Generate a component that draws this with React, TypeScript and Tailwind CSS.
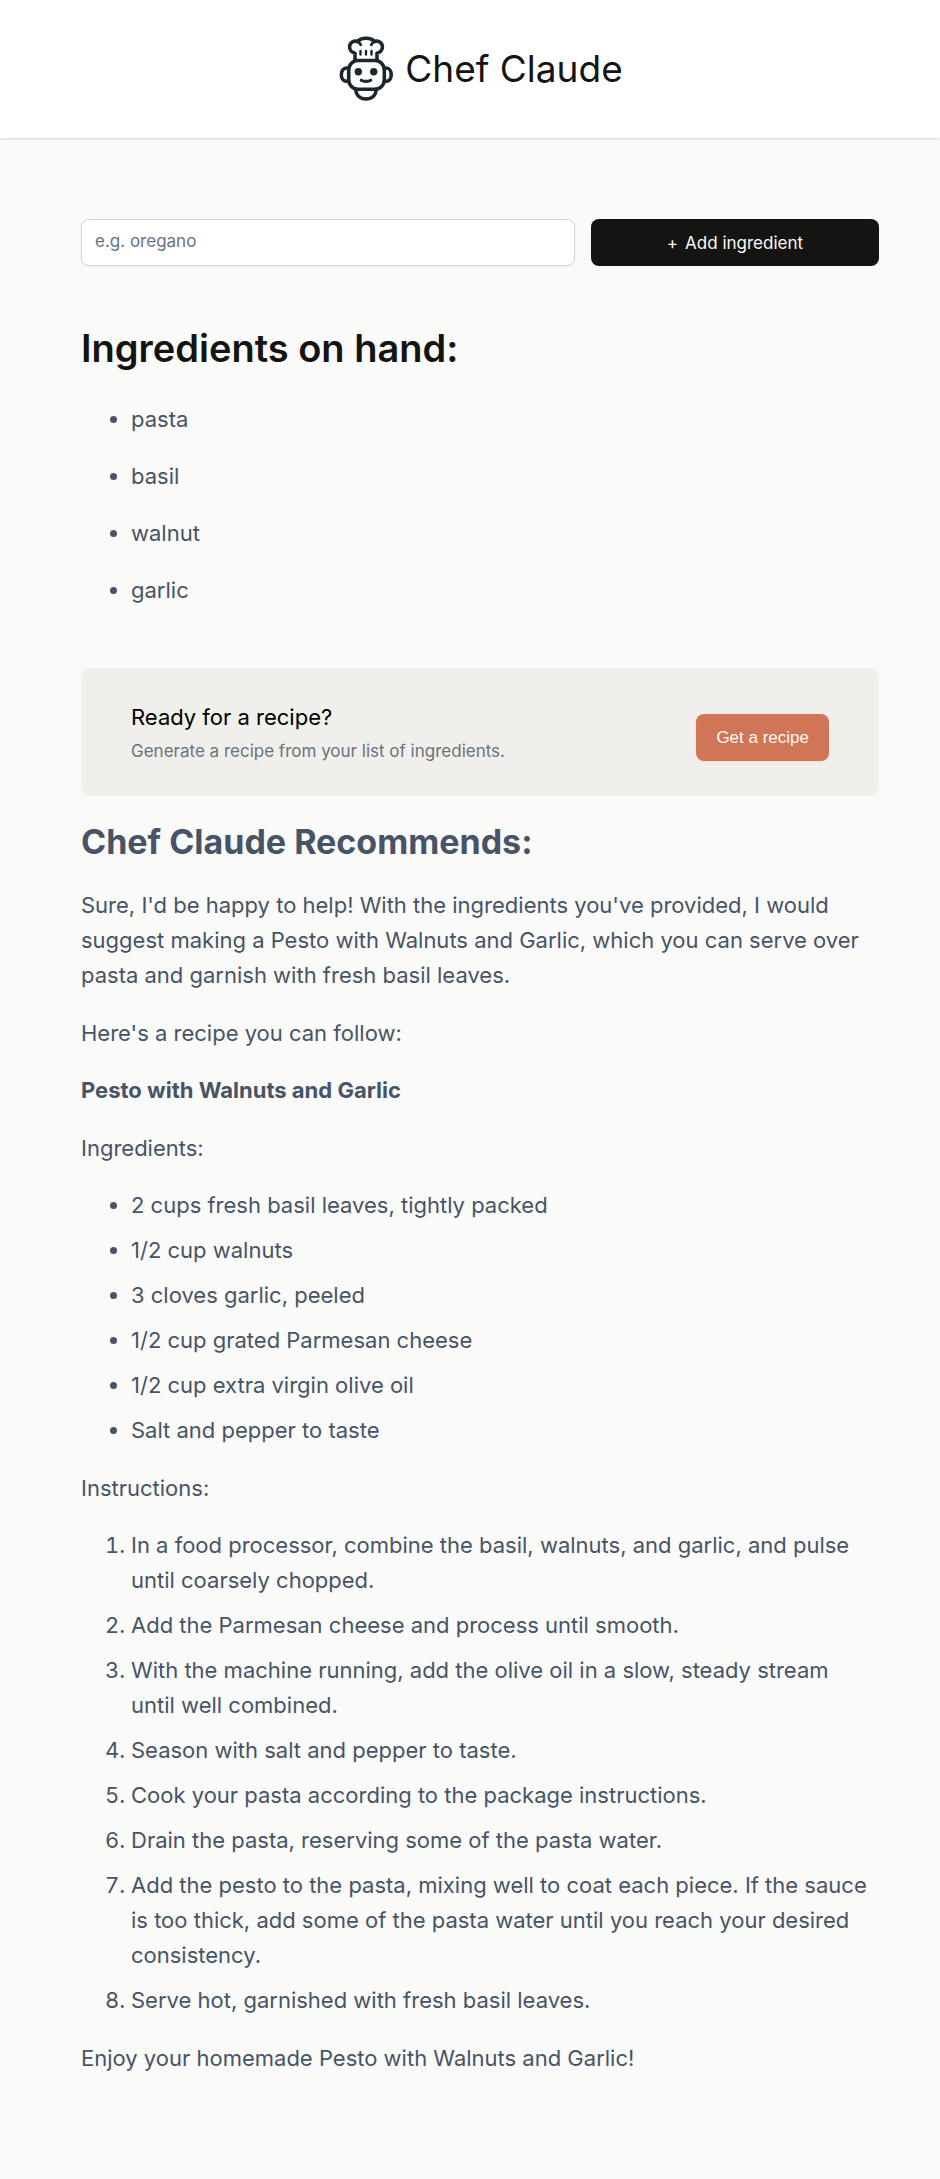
import { useState } from "react";
import type { FormEvent } from "react";

const recipeIngredients = [
  "2 cups fresh basil leaves, tightly packed",
  "1/2 cup walnuts",
  "3 cloves garlic, peeled",
  "1/2 cup grated Parmesan cheese",
  "1/2 cup extra virgin olive oil",
  "Salt and pepper to taste",
];

const instructions = [
  "In a food processor, combine the basil, walnuts, and garlic, and pulse until coarsely chopped.",
  "Add the Parmesan cheese and process until smooth.",
  "With the machine running, add the olive oil in a slow, steady stream until well combined.",
  "Season with salt and pepper to taste.",
  "Cook your pasta according to the package instructions.",
  "Drain the pasta, reserving some of the pasta water.",
  "Add the pesto to the pasta, mixing well to coat each piece. If the sauce is too thick, add some of the pasta water until you reach your desired consistency.",
  "Serve hot, garnished with fresh basil leaves.",
];

function ChefLogo() {
  return (
    <svg
      viewBox="0 0 54 66"
      className="h-[66px] w-[54px] shrink-0"
      fill="none"
      stroke="#1c272e"
      strokeWidth="3.6"
      strokeLinejoin="round"
      strokeLinecap="round"
      aria-hidden="true"
    >
      <path d="M16 24.500V17.200C12.500 16.500 10.300 13.700 10.600 10.300C10.900 6.500 14.800 4.100 18.700 5.600C20.300 3.200 23.500 2.300 27 2.300C30.500 2.300 33.700 3.200 35.300 5.600C39.200 4.100 43.100 6.500 43.400 10.300C43.700 13.700 41.500 16.500 38 17.200V24.500" />
      <path d="M18.700 5.600C20.500 6.300 21.300 7.300 21.700 8.800M35.300 5.600C33.500 6.300 32.700 7.300 32.300 8.800" strokeWidth="2.800" />
      <path d="M21.500 15V18.500M27 15V18.500M32.500 15V18.500" strokeWidth="2.400" />
      <rect x="9.700" y="24.500" width="35.600" height="28.800" rx="9.500" />
      <path d="M9.500 32H7.500C4.500 32 2.300 35 2.300 38.700C2.300 42.400 4.500 45.300 7.500 45.300H9.500M45.300 32H47.300C50.200 32 52.200 35 52.200 38.700C52.200 42.400 50.200 45.300 47.300 45.300H45.300" />
      <path d="M16.800 53.300C17 59.500 21.300 63 27 63C32.700 63 37 59.500 37.200 53.300" />
      <circle cx="19.300" cy="35.700" r="3.700" fill="#1c272e" stroke="none" />
      <circle cx="34.700" cy="35.700" r="3.700" fill="#1c272e" stroke="none" />
      <path d="M22.300 44.300C24.500 45.800 29.500 45.800 31.700 44.300" strokeWidth="3.200" />
    </svg>
  );
}

export default function App() {
  const [ingredients, setIngredients] = useState(["pasta", "basil", "walnut", "garlic"]);
  const [draft, setDraft] = useState("");

  function addIngredient(event: FormEvent) {
    event.preventDefault();
    if (!draft.trim()) return;
    setIngredients([...ingredients, draft.trim()]);
    setDraft("");
  }

  return (
    <div className="min-h-screen bg-[#fafaf8] font-['Inter',sans-serif] text-[22px] leading-[35px] text-[#475467]">
      <header className="flex h-[138px] items-center justify-center gap-3 bg-white pl-[22px] shadow-[0_1px_3px_0_rgba(0,0,0,0.1),0_1px_2px_0_rgba(0,0,0,0.06)]">
        <ChefLogo />
        <h1 className="text-[37px] leading-[48px] text-[#141413]">Chef Claude</h1>
      </header>

      <main className="pt-[81px] pr-[61px] pb-[100px] pl-[81px]">
        <form onSubmit={addIngredient} className="grid grid-cols-[12fr_7fr] gap-4">
          <input
            type="text"
            aria-label="Add ingredient"
            placeholder="e.g. oregano"
            value={draft}
            onChange={(event) => setDraft(event.target.value)}
            className="h-[47px] min-w-0 rounded-lg border border-[#d1d5db] bg-white px-[13px] pb-1 text-[17px] leading-6 shadow-[0_1px_2px_0_rgba(0,0,0,0.05)] placeholder:text-[#6b7280]"
          />
          <button
            type="submit"
            className="flex h-[47px] min-w-0 items-center justify-center gap-[7px] rounded-lg bg-[#141413] text-[17px] leading-6 text-[#fafaf8]"
          >
            <span>+</span>
            <span>Add ingredient</span>
          </button>
        </form>

        <section>
          <h2 className="mt-[52px] text-[38px] leading-[60px] font-semibold text-[#141413]">Ingredients on hand:</h2>
          <ul className="mt-6 mb-[60px] flex list-disc flex-col gap-[22px] pl-[50px]">
            {ingredients.map((name) => (
              <li key={name}>{name}</li>
            ))}
          </ul>

          <div className="flex items-center justify-between gap-4 rounded-[10px] bg-[#f0efeb] px-[50px] pt-8 pb-[29px]">
            <div>
              <h3 className="text-[22px] leading-[35px] text-black">Ready for a recipe?</h3>
              <p className="text-[17px] leading-8 text-[#6b7280]">Generate a recipe from your list of ingredients.</p>
            </div>
            <button
              type="button"
              className="mt-2 h-[47px] shrink-0 rounded-lg bg-[#d17557] px-5 font-['Liberation_Sans',sans-serif] text-[17px] leading-6 text-[#fafaf8] shadow-[0_1px_2px_0_rgba(0,0,0,0.05)]"
            >
              Get a recipe
            </button>
          </div>
        </section>

        <section className="flex flex-col gap-[23px]">
          <h2 className="mt-[19px] -mb-1 text-[34px] leading-[54px] font-bold">Chef Claude Recommends:</h2>
          <p>
            Sure, I'd be happy to help! With the ingredients you've provided, I would suggest making a Pesto with Walnuts
            and Garlic, which you can serve over pasta and garnish with fresh basil leaves.
          </p>
          <div className="flex flex-col gap-[22px]">
            <p>Here's a recipe you can follow:</p>
            <p>
              <strong>Pesto with Walnuts and Garlic</strong>
            </p>
          </div>
          <div className="flex flex-col gap-[22px]">
            <p>Ingredients:</p>
            <ul className="flex list-disc flex-col gap-[10px] pl-[50px]">
              {recipeIngredients.map((item) => (
                <li key={item}>{item}</li>
              ))}
            </ul>
          </div>
          <div className="flex flex-col gap-[22px]">
            <p>Instructions:</p>
            <ol className="flex list-decimal flex-col gap-[10px] pr-1 pl-[50px]">
              {instructions.map((step) => (
                <li key={step}>{step}</li>
              ))}
            </ol>
          </div>
          <p>Enjoy your homemade Pesto with Walnuts and Garlic!</p>
        </section>
      </main>
    </div>
  );
}
